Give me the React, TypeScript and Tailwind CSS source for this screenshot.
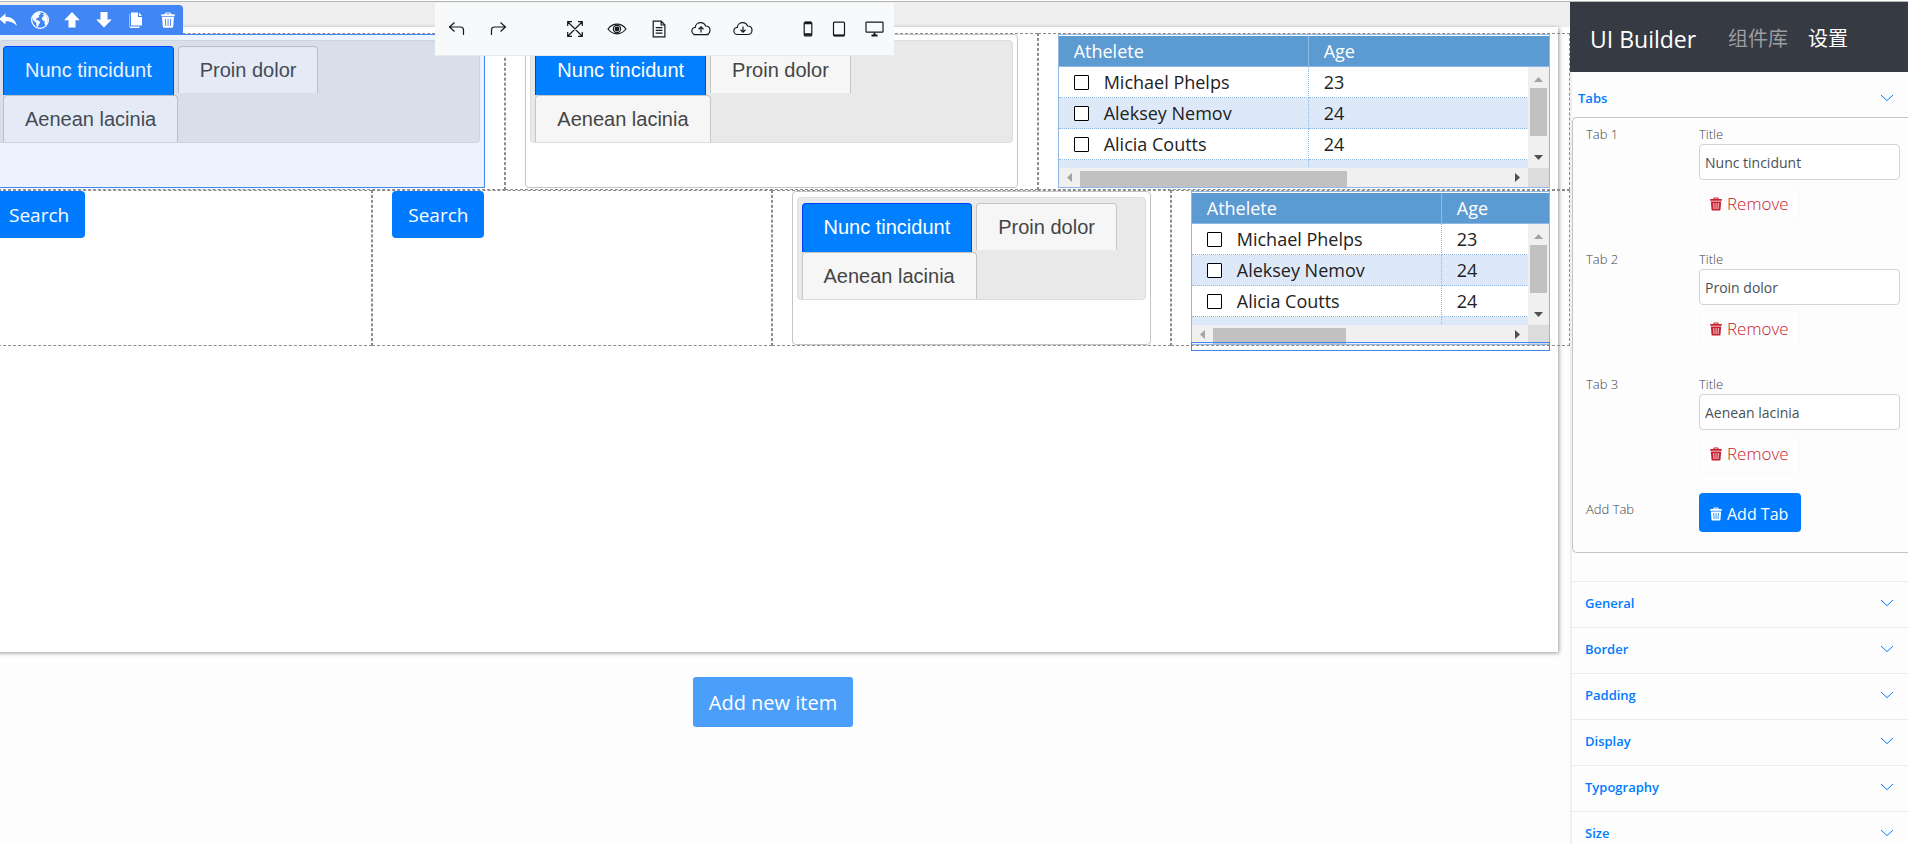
import type { ReactNode } from "react";

const uiFont = "font-['Open_Sans','Noto_Sans_CJK_SC',sans-serif]";

type IconProps = { children: ReactNode; className?: string; box?: string };

function Line({ children, className = "size-5", box = "0 0 20 20" }: IconProps) {
  return (
    <svg viewBox={box} className={className} fill="none" stroke="currentColor" strokeWidth="1.2" aria-hidden="true">
      {children}
    </svg>
  );
}

function Solid({ children, className = "size-5", box = "0 0 20 20" }: IconProps) {
  return (
    <svg viewBox={box} className={className} fill="currentColor" aria-hidden="true">
      {children}
    </svg>
  );
}

function Chevron() {
  return (
    <Line className="mb-0.5 h-2 w-3.5" box="0 0 14 8">
      <path d="M1 1l6 5.600L13 1" strokeWidth="1" />
    </Line>
  );
}

function TrashIcon({ className }: { className: string }) {
  return (
    <Solid className={className} box="0 0 14 16">
      <path
        fillRule="evenodd"
        d="M4 2.2V1.4Q4 .4 5 .4h4q1 0 1 1v.8h3.2q.6 0 .6.6v1.4H.2V2.8q0-.6.6-.6zM5.2 2.2h3.6v-.7H5.200zM1 5.100h12l-.8 9.600q-.1 1-1.100 1H2.900q-1 0-1.100-1zM3.900 6.700l.4 7.200h.9l-.4-7.200zM6.600 6.700v7.200h.9V6.700zM9.300 6.700l-.4 7.200h.9l.4-7.200z"
      />
    </Solid>
  );
}

function SelectionBar() {
  const actions: { label: string; icon: ReactNode }[] = [
    {
      label: "Select parent",
      icon: (
        <Solid>
          <path d="M7.500 3.500L1 9l6.500 5.500V11.200c4.500-.2 8 1 11.300 4.600C18 10.500 14 6.900 7.500 6.700z" />
        </Solid>
      ),
    },
    {
      label: "Style",
      icon: (
        <Solid>
          <path fillRule="evenodd" d="M10 1a9 9 0 100 18 9 9 0 000-18zm0 1.300a7.700 7.700 0 110 15.400 7.700 7.700 0 010-15.400z" />
          <path d="M3 6.500C4.500 3.800 7 2.300 10 2.300l.8 1.500-2 1.400.5 1.800-2.600 1.200-.9 1.700 3 .6 1.400 2-1.600 2.200-.6 2.500-1.500-1.500-.5-3.200-2-1.500-1.300-1.600z" />
          <path d="M12.500 4.200l2.200-.3 2.200 3 .8 3.600-.8 3.600-1.500 1.600-1-2.700.3-2-1.700-.3-1.300-2 1-2 1.600-.6z" />
        </Solid>
      ),
    },
    {
      label: "Move up",
      icon: (
        <Solid>
          <path d="M10 2l7.800 8.300h-4.300V17.500h-7v-7.200H2.200z" />
        </Solid>
      ),
    },
    {
      label: "Move down",
      icon: (
        <Solid>
          <path d="M10 17.500L2.200 9.400h4.300V2h7v7.400h4.300z" />
        </Solid>
      ),
    },
    {
      label: "Duplicate",
      icon: (
        <Solid>
          <path d="M5 2.500h7v4.600h4V15.500H5zM13 2.500l3 3.600h-3z" />
          <path d="M4 4v12.600h9.500v1.300H5q-1.500 0-1.500-1.500V4z" />
        </Solid>
      ),
    },
    { label: "Delete", icon: <TrashIcon className="h-4 w-3.5" /> },
  ];
  return (
    <div className="absolute top-1 -left-2 z-10 flex h-[30px] w-[191px] items-center gap-3 rounded-tr bg-[#4285f4] pl-1.5 text-white">
      {actions.map((a) => (
        <button key={a.label} type="button" aria-label={a.label} className="flex size-5 shrink-0 items-center justify-center">
          {a.icon}
        </button>
      ))}
    </div>
  );
}

function PageToolbar() {
  const btn = "flex size-6 items-center justify-center";
  const cloud = "M5.200 15.500H4.600a3.600 3.600 0 01-.3-7.200C4.500 5.500 7 3.600 9.600 3.600c2.300 0 4.300 1.300 5 3.400 2.700 0 4.400 1.900 4.400 4.300 0 2.400-1.800 4.200-4.100 4.200z";
  return (
    <div className="absolute top-0.5 left-[435px] z-20 flex h-[53px] items-center border-b border-[#e9ebec] bg-[#f8f9fa] pr-1 pl-2.5 text-[#16181b]">
      <div className="flex gap-[17px]">
        <button type="button" aria-label="Undo" className={btn}>
          <Line className="h-4 w-[18px]" box="0 0 18 16">
            <path d="M6.500 1.500L1.500 6l5 4.500M1.500 6h11q3 0 3 3v5" />
          </Line>
        </button>
        <button type="button" aria-label="Redo" className={btn}>
          <Line className="h-4 w-[18px]" box="0 0 18 16">
            <path d="M11.500 1.500l5 4.500-5 4.500M16.500 6h-11q-3 0-3 3v5" />
          </Line>
        </button>
      </div>
      <div className="ml-[53px] flex gap-[18px]">
        <button type="button" aria-label="Designer mode" className={btn}>
          <Line className="size-[18px]" box="0 0 18 18">
            <path d="M2 2l14 14M16 2L2 16M1.700 6V1.700H6M12 1.700h4.300V6M16.300 12v4.300H12M6 16.300H1.700V12" />
          </Line>
        </button>
        <button type="button" aria-label="Preview" className={btn}>
          <Line>
            <path d="M1 10c2.500-3.300 5.500-4.800 9-4.800s6.500 1.500 9 4.800c-2.500 3.300-5.500 4.800-9 4.800S3.500 13.300 1 10z" />
            <circle cx="10" cy="10" r="3.600" />
            <circle cx="10" cy="10" r="1.800" fill="currentColor" />
          </Line>
        </button>
        <button type="button" aria-label="Export" className={btn}>
          <Line>
            <path d="M4.200 2.200h8l3.700 3.800v11.900H4.200zM12.200 2.200V6h3.700M6.700 8.700h6.700M6.700 11.400h6.700M6.700 14.100h6.700" />
          </Line>
        </button>
        <button type="button" aria-label="Save" className={btn}>
          <Line>
            <path d={cloud} />
            <path d="M2.500 15.700h15M10 13.500V8M7.500 10.300L10 7.900l2.500 2.400" />
          </Line>
        </button>
        <button type="button" aria-label="Download" className={btn}>
          <Line>
            <path d={cloud} />
            <path d="M10 7.500V13M7.500 10.700L10 13.100l2.500-2.400" />
          </Line>
        </button>
      </div>
      <div className="ml-[41px] flex gap-[7px]">
        <button type="button" aria-label="Mobile view" className={btn}>
          <Line className="h-4 w-2.5" box="0 0 10 16">
            <rect x="1.200" y="1" width="7.600" height="14" rx="1.300" />
            <path d="M1.500 2h7M1.500 13.500h7" strokeWidth="2.600" />
          </Line>
        </button>
        <button type="button" aria-label="Tablet view" className={btn}>
          <Line className="h-4 w-3.5" box="0 0 14 16">
            <rect x="1.500" y="1.200" width="11" height="13.600" rx="1" />
            <path d="M1.500 14.300h11" strokeWidth="1.800" />
          </Line>
        </button>
        <button type="button" aria-label="Desktop view" className="flex h-6 w-8 items-center justify-center">
          <Line className="h-4 w-[19px]" box="0 0 19 16">
            <rect x="1" y="1.200" width="17" height="10" rx=".6" />
            <path d="M9.500 11.500v3M6.500 14.500h6" strokeWidth="1.800" />
          </Line>
        </button>
      </div>
    </div>
  );
}

function TabsWidget({ selected = false }: { selected?: boolean }) {
  const plain = "h-[47px] rounded-t border border-b-0 border-[#c5c5c5] bg-[#f6f6f6] px-[21px] text-[#454545]";
  return (
    <div
      className={
        selected
          ? "relative h-[154px] border border-[#4285f4] bg-white px-1 pt-[5px]"
          : "relative h-[154px] rounded border border-[#c5c5c5] bg-white px-1 pt-[5px]"
      }
    >
      <div
        role="tablist"
        className="flex flex-wrap items-start gap-x-1 rounded border border-[#dddddd] bg-[#e9e9e9] pt-[5px] pl-1 font-['Liberation_Sans',Arial,sans-serif] text-xl"
      >
        <button type="button" role="tab" aria-selected="true" className="h-[49px] rounded-t border border-b-0 border-[#003eff] bg-[#007fff] px-[21px] pb-0.5 text-white">
          Nunc tincidunt
        </button>
        <button type="button" role="tab" aria-selected="false" className={plain}>
          Proin dolor
        </button>
        <button type="button" role="tab" aria-selected="false" className={plain}>
          Aenean lacinia
        </button>
      </div>
      {selected && <div className="pointer-events-none absolute inset-0 bg-[#4285f4]/10" />}
    </div>
  );
}

const athletes = [
  { name: "Michael Phelps", age: "23" },
  { name: "Aleksey Nemov", age: "24" },
  { name: "Alicia Coutts", age: "24" },
];

function GridWidget({ id, thumb }: { id: string; thumb: string }) {
  return (
    <div className="h-[154px] border border-[#8fb8e6] bg-white pt-px">
      <div className="relative h-[132px] overflow-hidden">
        <table className="w-full table-fixed border-separate border-spacing-0 text-left text-lg leading-[30px] text-[#222222]">
          <colgroup>
            <col className="w-[250px]" />
            <col />
          </colgroup>
          <thead className="bg-[#5c9ad2] text-white">
            <tr>
              <th className="border-r border-b border-[#8fb8e6] px-[15px] py-0 font-normal">Athelete</th>
              <th className="border-b border-[#8fb8e6] px-[15px] py-0 font-normal">Age</th>
            </tr>
          </thead>
          <tbody>
            {athletes.map((a, i) => (
              <tr key={a.name} className="even:bg-[#dde9f8]">
                <td className="border-r border-b border-dotted border-[#8fb8e6] px-[15px] py-0">
                  <label className="flex items-center gap-[15px]" htmlFor={`${id}-${i}`}>
                    <input
                      id={`${id}-${i}`}
                      type="checkbox"
                      className="size-[15px] appearance-none rounded-[1px] border border-black bg-white"
                    />
                    {a.name}
                  </label>
                </td>
                <td className="border-b border-dotted border-[#8fb8e6] px-[15px] py-0">{a.age}</td>
              </tr>
            ))}
            <tr className="bg-[#dde9f8]">
              <td className="h-[31px] border-r border-dotted border-[#8fb8e6]" />
              <td />
            </tr>
          </tbody>
        </table>
        <div className="absolute top-[31px] right-0 bottom-0 flex w-[21px] flex-col items-center justify-between bg-[#f0f0f0] pt-2.5 pb-2">
          <Solid className="h-[5px] w-[9px] text-[#a3a3a3]" box="0 0 9 5">
            <path d="M0 5L4.500 0 9 5z" />
          </Solid>
          <div className="mt-1.5 mb-auto h-12 w-[17px] bg-[#c1c1c1]" />
          <Solid className="h-[5px] w-[9px] text-[#505050]" box="0 0 9 5">
            <path d="M0 0l4.500 5L9 0z" />
          </Solid>
        </div>
      </div>
      <div className="flex h-[19px] bg-[#f0f0f0]">
        <div className="flex flex-1 items-center pr-2 pl-2">
          <Solid className="h-[9px] w-[5px] text-[#a3a3a3]" box="0 0 5 9">
            <path d="M5 0L0 4.500 5 9z" />
          </Solid>
          <div className="mr-auto flex h-full flex-1 items-end pt-[3px] pl-2">
            <div className={thumb} />
          </div>
          <Solid className="h-[9px] w-[5px] text-[#505050]" box="0 0 5 9">
            <path d="M0 0l5 4.500L0 9z" />
          </Solid>
        </div>
        <div className="w-[21px] bg-[#dcdcdc]" />
      </div>
    </div>
  );
}

function Cell({ children }: { children: ReactNode }) {
  return <div className="min-w-0 border border-dashed border-[#8c8c8c] px-[19px]">{children}</div>;
}

function SearchButton() {
  return (
    <button type="button" className="h-[47px] rounded bg-[#007bff] px-4 pt-0.5 text-[19px] text-white">
      Search
    </button>
  );
}

function Builder() {
  return (
    <main className="relative min-w-0 flex-1 overflow-hidden">
      <div className="border-t border-[#b4b8b4] bg-[#eeeeee] pt-[25px]" />
      <div className="mr-3 -ml-[27px] h-[625px] bg-[#fefefe] pt-1.5 shadow-[1px_1px_4px_rgba(0,0,0,0.4)]">
        <div className="relative -mr-3">
          <div className="grid h-[157px] grid-cols-3">
            <Cell>
              <TabsWidget selected />
            </Cell>
            <Cell>
              <TabsWidget />
            </Cell>
            <Cell>
              <GridWidget id="wide" thumb="h-full w-[267px] bg-[#c1c1c1]" />
            </Cell>
          </div>
          <div className="grid h-[156px] grid-cols-4">
            <Cell>
              <SearchButton />
            </Cell>
            <Cell>
              <SearchButton />
            </Cell>
            <Cell>
              <TabsWidget />
            </Cell>
            <Cell>
              <div className="relative">
                <GridWidget id="narrow" thumb="h-full w-[133px] bg-[#c1c1c1]" />
                <div className="absolute inset-x-0 top-[151px] h-[9px] border border-[#4285f4]" />
              </div>
            </Cell>
          </div>
        </div>
      </div>
      <div className="-ml-6 flex justify-center pt-[25px]">
        <button type="button" className="h-[50px] w-40 rounded-[3px] bg-[#4b9ffa] pt-0.5 text-xl text-white">
          Add new item
        </button>
      </div>
      <SelectionBar />
      <PageToolbar />
    </main>
  );
}

const tabTitles = ["Nunc tincidunt", "Proin dolor", "Aenean lacinia"];
const sections = ["General", "Border", "Padding", "Display", "Typography", "Size"];

function Sidebar() {
  return (
    <aside className="w-[338px] shrink-0 overflow-hidden border-t border-[#b4b8b4] bg-[#fdfdfd]">
      <nav className="flex h-[70px] items-center bg-[#363a42] pt-1 pl-5 text-white">
        <h1 className="w-[138px] text-[23px]">UI Builder</h1>
        <a href="#components" className="mr-5 text-xl text-[#9b9da1]">
          组件库
        </a>
        <a href="#settings" className="text-xl">
          设置
        </a>
      </nav>
      <div className="border-l-2 border-[#f0f0f0]">
        <button type="button" className="flex h-[45px] w-full items-center justify-between pt-2 pr-3.5 pl-1.5 text-[13px] font-semibold text-[#007bff]">
          Tabs
          <Chevron />
        </button>
        <div className="rounded-l-[5px] border border-r-0 border-[#c5c5c5] pr-2 pl-[13px] text-[13px] text-[#3d444b]">
          {tabTitles.map((title, i) => (
            <div key={title} className="flex h-[125px] pt-[7px]">
              <div className="w-[113px] leading-[18px] font-light">Tab {i + 1}</div>
              <div className="flex-1">
                <label htmlFor={`tab-title-${i}`} className="mb-px block leading-[18px] font-light">
                  Title
                </label>
                <input
                  id={`tab-title-${i}`}
                  type="text"
                  defaultValue={title}
                  className="block h-9 w-full rounded border border-[#ced4da] bg-white px-[5px] text-sm text-[#495057]"
                />
                <button
                  type="button"
                  className="mt-[5px] flex h-[38px] w-[101px] items-center gap-[5px] rounded border border-[#f8f9fa] pl-2.5 text-[17px] font-light text-[#c9202f]"
                >
                  <TrashIcon className="h-3.5 w-3" />
                  Remove
                </button>
              </div>
            </div>
          ))}
          <div className="flex h-[59px]">
            <div className="w-[113px] pt-[7px] leading-[18px] font-light">Add Tab</div>
            <button
              type="button"
              className="flex h-[39px] w-[102px] items-center gap-[5px] rounded bg-[#007bff] pt-0.5 pl-[11px] text-base text-white"
            >
              <TrashIcon className="h-3.5 w-3" />
              Add Tab
            </button>
          </div>
        </div>
        <div className="pt-7">
          {sections.map((name) => (
            <button
              key={name}
              type="button"
              className="flex h-[46px] w-full items-center justify-between border-t border-[#ebebeb] pr-3.5 pb-0.5 pl-[13px] text-[13px] font-semibold text-[#007bff]"
            >
              {name}
              <Chevron />
            </button>
          ))}
        </div>
      </div>
    </aside>
  );
}

export default function App() {
  return (
    <div className={`flex h-screen overflow-hidden bg-[#fdfdfd] pt-px ${uiFont}`}>
      <Builder />
      <Sidebar />
    </div>
  );
}
